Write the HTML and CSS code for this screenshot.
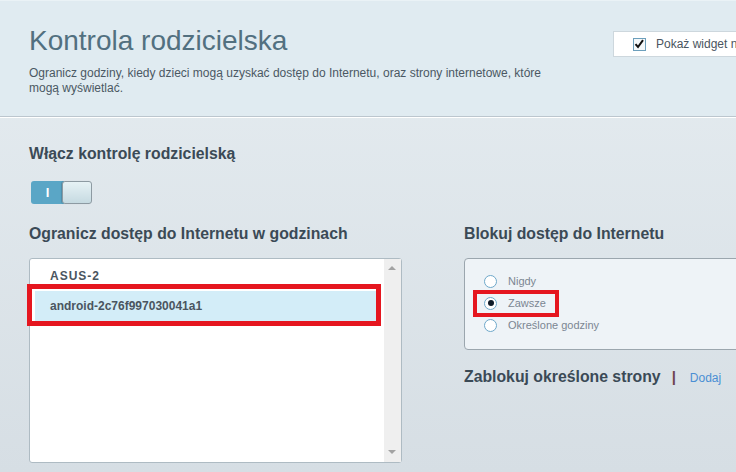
FILE: index.html
```html
<!DOCTYPE html>
<html lang="pl">
<head>
    <meta charset="UTF-8">
    <meta name="viewport" content="width=device-width, initial-scale=1.0">
    <title>Kontrola rodzicielska</title>
    <link rel="stylesheet" href="styles.css">
</head>
<body>
    <div class="header">
        <div class="intro">
            <h1 class="title">Kontrola rodzicielska</h1>
            <p class="desc">Ogranicz godziny, kiedy dzieci mogą uzyskać dostęp do Internetu, oraz strony internetowe, które<br>mogą wyświetlać.</p>
        </div>
        <label class="widget">
            <span class="checkbox">
                <svg width="12" height="12" viewBox="0 0 12 12"><path d="M2.5 6.2 L5 9 L10 2.2" fill="none" stroke="#111" stroke-width="2"/></svg>
            </span>
            Pokaż widget na stronie głównej
        </label>
    </div>

    <div class="content">
        <h2 class="heading">Włącz kontrolę rodzicielską</h2>
        <div class="toggle">
            <span class="toggle-on">I</span>
            <span class="toggle-knob"></span>
        </div>

        <div class="columns">
            <div class="col-left">
                <h2 class="heading">Ogranicz dostęp do Internetu w godzinach</h2>
                <div class="devices">
                    <ul class="device-list">
                        <li class="group">ASUS-2</li>
                        <li class="device selected">android-2c76f997030041a1</li>
                    </ul>
                    <div class="scrollbar">
                        <span class="arrow up"></span>
                        <span class="arrow down"></span>
                    </div>
                    <div class="mark mark-device"></div>
                </div>
            </div>

            <div class="col-right">
                <h2 class="heading">Blokuj dostęp do Internetu</h2>
                <div class="radio-box">
                    <label class="radio"><span class="dot"></span>Nigdy</label>
                    <label class="radio"><span class="dot checked"></span>Zawsze</label>
                    <label class="radio"><span class="dot"></span>Określone godziny</label>
                    <div class="mark mark-radio"></div>
                </div>
                <div class="sites">
                    <h2 class="heading">Zablokuj określone strony</h2>
                    <span class="sep">|</span>
                    <a class="link" href="#">Dodaj</a>
                </div>
            </div>
        </div>
    </div>
</body>
</html>
```

FILE: styles.css
```css
html, body {
    margin: 0;
    height: 100%;
}
body {
    width: 736px;
    overflow: hidden;
    font-family: "Liberation Sans", Arial, sans-serif;
    background: linear-gradient(#e6edf1, #d6dee4);
    color: #3b4a56;
}
.header {
    box-sizing: border-box;
    height: 117px;
    padding: 25px 0 0 29px;
    display: flex;
    background: #e0ebf1;
    border-top: 1px solid #eaf2f6;
    border-bottom: 1px solid #bcc6ce;
    box-shadow: 0 1px 0 #ffffff;
}
.intro {
    flex: 0 0 584px;
    margin-top: -1px;
}
.title {
    margin: 0;
    font-size: 28px;
    font-weight: normal;
    line-height: 32px;
    color: #527080;
}
.desc {
    margin: 9px 0 0;
    font-size: 12px;
    line-height: 15px;
    color: #4b5863;
    white-space: nowrap;
}
.widget {
    flex: 0 0 auto;
    box-sizing: border-box;
    height: 26px;
    margin-top: 5px;
    padding: 0 20px 0 19px;
    display: flex;
    align-items: center;
    background: #ffffff;
    border: 1px solid #cdd7dd;
    font-size: 12px;
    color: #4a5560;
    white-space: nowrap;
}
.checkbox {
    box-sizing: border-box;
    width: 13px;
    height: 13px;
    margin-right: 10px;
    border: 1px solid #6c9fbc;
    background: #f4f8fa;
    display: flex;
}
.checkbox svg {
    margin: -1px 0 0 -1px;
}

.content {
    padding: 28px 0 0 29px;
}
.heading {
    margin: 0;
    font-size: 15.8px;
    font-weight: bold;
    line-height: 18px;
    color: #3b4a56;
}
.toggle {
    display: flex;
    width: 62px;
    height: 23px;
    margin: 18px 0 0 2px;
}
.toggle-on {
    width: 33px;
    margin-right: -2px;
    background: #5aa6c6;
    border-radius: 3px 0 0 3px;
    color: #ffffff;
    font-size: 13px;
    font-weight: bold;
    line-height: 23px;
    text-align: center;
}
.toggle-knob {
    box-sizing: border-box;
    width: 30px;
    height: 23px;
    border: 1px solid #8d9aa2;
    border-radius: 3px;
    background: linear-gradient(#e6f2f5, #c6dae1);
    box-shadow: -1px 0 1px rgba(0, 0, 0, 0.15);
}

.columns {
    display: flex;
    gap: 62px;
    margin-top: 21px;
}
.col-left {
    flex: 0 0 373px;
}
.col-right {
    flex: 1;
}
.devices {
    position: relative;
    box-sizing: border-box;
    height: 205px;
    margin-top: 15px;
    display: flex;
    background: #ffffff;
    border: 1px solid #aebbc3;
    border-radius: 3px;
}
.device-list {
    flex: 1;
    margin: 0;
    padding: 0 8px 0 5px;
    list-style: none;
    font-size: 12px;
    font-weight: bold;
    color: #4a5560;
}
.group {
    box-sizing: border-box;
    height: 32px;
    padding: 9px 0 0 15px;
    line-height: 16px;
    letter-spacing: 1px;
}
.device {
    height: 30px;
    padding-left: 15px;
    line-height: 30px;
}
.selected {
    background: #d3edf8;
}
.scrollbar {
    width: 17px;
    background: #efefef;
    position: relative;
}
.arrow {
    position: absolute;
    left: 4px;
    width: 0;
    height: 0;
    border-style: solid;
}
.up {
    top: 7px;
    border-width: 0 4px 4px 4px;
    border-color: transparent transparent #a3a3a3 transparent;
}
.down {
    bottom: 8px;
    border-width: 4px 4px 0 4px;
    border-color: #a3a3a3 transparent transparent transparent;
}

.radio-box {
    position: relative;
    box-sizing: border-box;
    height: 92px;
    width: 300px;
    margin-top: 15px;
    padding: 11px 0 0 19px;
    background: #eef3f7;
    border: 1px solid #9ba6ae;
    border-radius: 4px;
}
.radio {
    display: flex;
    align-items: center;
    height: 22px;
    font-size: 11px;
    color: #7b8692;
}
.dot {
    box-sizing: border-box;
    width: 13px;
    height: 13px;
    margin-right: 11px;
    border: 1px solid #6ea8ca;
    border-radius: 50%;
    background: #ffffff;
    display: flex;
    align-items: center;
    justify-content: center;
}
.checked::after {
    content: "";
    width: 6px;
    height: 6px;
    border-radius: 50%;
    background: #0e1b28;
}
.mark {
    position: absolute;
    box-sizing: border-box;
    border: 5px solid #e5161f;
}
.mark-device {
    left: -3px;
    top: 25px;
    width: 354px;
    height: 42px;
}
.mark-radio {
    left: 8px;
    top: 31px;
    width: 86px;
    height: 27px;
    border-width: 4px;
}

.sites {
    display: flex;
    align-items: baseline;
    margin-top: 18px;
}
.sep {
    margin: 0 14px 0 11px;
    font-size: 15px;
    font-weight: bold;
    color: #6e4550;
}
.link {
    font-size: 12px;
    color: #4a8fd4;
    text-decoration: none;
}
```
